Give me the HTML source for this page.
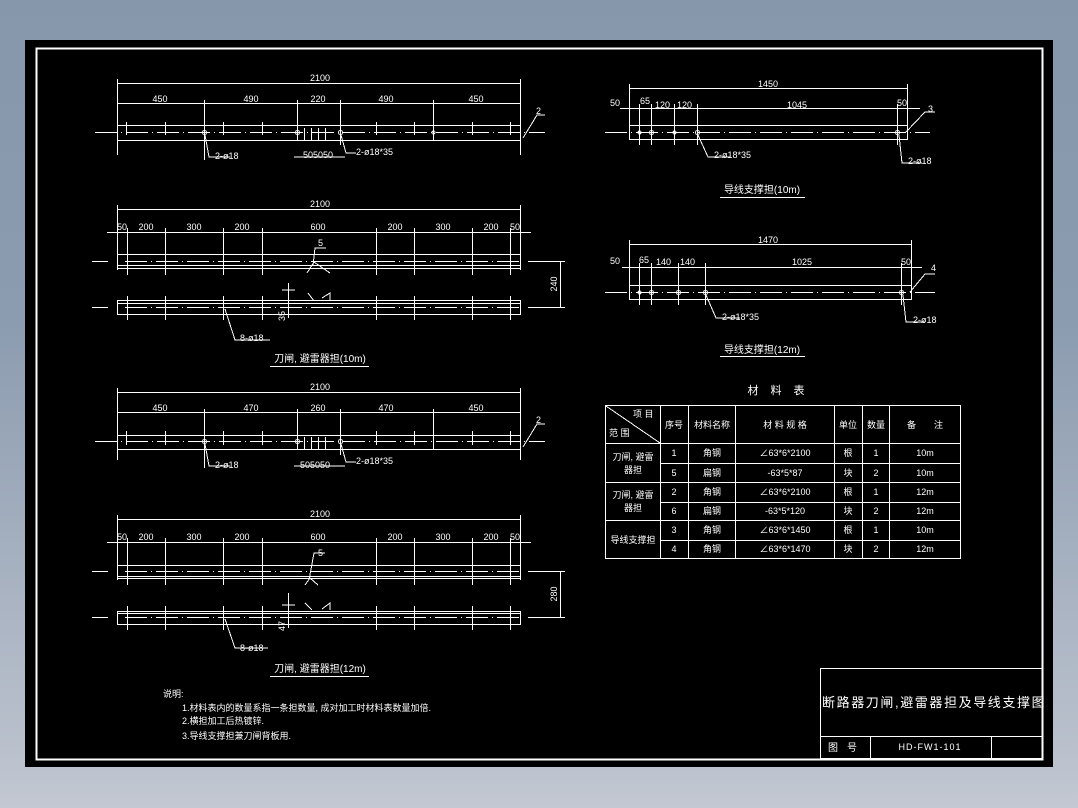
<!DOCTYPE html>
<html><head><meta charset="utf-8"><style>
html,body{margin:0;padding:0;width:1078px;height:808px;overflow:hidden;background:linear-gradient(#8797ab,#8c9cb0 40%,#b9c0cc 92%,#c3c8d2);}
svg{position:absolute;left:0;top:0}
text{fill:#fff;font-family:"Liberation Sans","WenQuanYi Zen Hei","Noto Sans CJK SC",sans-serif;font-size:9px}
.c{text-anchor:middle}
.z{font-size:10px}
</style></head><body>
<svg width="1078" height="808" viewBox="0 0 1078 808">
<rect x="25" y="40" width="1028" height="727" fill="#000"/>
<g fill="none" stroke="#fff" stroke-width="1" shape-rendering="crispEdges">
<rect x="36.5" y="48.5" width="1006" height="711" stroke-width="2"/>
<rect x="820.5" y="668.5" width="222" height="90"/>
<line x1="820" y1="736.5" x2="1042" y2="736.5"/>
<line x1="870.5" y1="736" x2="870.5" y2="759"/>
<line x1="991.5" y1="736" x2="991.5" y2="759"/>

<line x1="117" y1="83.5" x2="520" y2="83.5"/>
<line x1="117" y1="103.5" x2="520" y2="103.5"/>
<path d="M117.5 79V155M520.5 79V155M204.5 100V160M297.5 100V140M340.5 100V145M433.5 100V140"/>
<rect x="117.5" y="125.5" width="403" height="15"/>
<path d="M95 132.5H545" stroke-dasharray="22 4 1 4"/>
<path d="M126.5 122V135M165.5 122V135M223.5 122V135M262.5 122V135M376.5 122V135M414.5 122V135M472.5 122V135M510.5 122V135M304.5 128V140M311.5 128V140M318.5 128V140M325.5 128V140"/>
<path d="M205 135L209 157H230M341 135L346 153H356M523 138L537 115H545M294 157H345"/>
<circle cx="204.5" cy="132.5" r="2"/><circle cx="297.5" cy="132.5" r="2"/><circle cx="340.5" cy="132.5" r="2"/><circle cx="433.5" cy="132.5" r="1.5"/>

<line x1="117" y1="209.5" x2="520" y2="209.5"/>
<line x1="107" y1="232.5" x2="531" y2="232.5"/>
<path d="M117.5 205V270M520.5 205V270M127.5 228V275M165.5 228V275M223.5 228V275M262.5 228V275M376.5 228V275M414.5 228V275M472.5 228V275M510.5 228V275"/>
<rect x="117.5" y="254.5" width="403" height="14"/>
<line x1="117" y1="265.5" x2="520" y2="265.5"/>
<path d="M92 261.5H108M125 261.5H520M528 261.5H545" stroke-dasharray="22 4 1 4"/>
<rect x="117.5" y="300.5" width="403" height="14"/>
<line x1="117" y1="303.5" x2="520" y2="303.5"/>
<path d="M92 307.5H108M125 307.5H520M528 307.5H545" stroke-dasharray="22 4 1 4"/>
<path d="M127.5 296V320M165.5 296V320M223.5 296V320M262.5 296V320M376.5 296V320M414.5 296V320M472.5 296V320M510.5 296V320M288.5 283V318M282 290H295"/>
<path d="M307 273L314 262L330 273M322 298L330 293V301M308 293L314 301"/>
<path d="M313 266L315 248H326M225 309L235 340H270"/>
<path d="M528 261.5H565M528 307.5H565M560.5 261V308"/>
<path d="M270 366.5H369"/>

<line x1="117" y1="392.5" x2="520" y2="392.5"/>
<line x1="117" y1="412.5" x2="520" y2="412.5"/>
<path d="M117.5 388V460M520.5 388V460M204.5 409V468M297.5 409V450M340.5 409V455M433.5 409V450"/>
<rect x="117.5" y="435.5" width="403" height="14"/>
<path d="M95 441.5H545" stroke-dasharray="22 4 1 4"/>
<path d="M126.5 431V445M165.5 431V445M223.5 431V445M262.5 431V445M376.5 431V445M414.5 431V445M472.5 431V445M510.5 431V445M304.5 437V450M311.5 437V450M318.5 437V450M325.5 437V450"/>
<path d="M205 444L209 466H230M341 444L346 462H356M523 447L537 424H545M294 466H345"/>
<circle cx="204.5" cy="441.5" r="2"/><circle cx="297.5" cy="441.5" r="2"/><circle cx="340.5" cy="441.5" r="2"/>

<line x1="117" y1="519.5" x2="520" y2="519.5"/>
<line x1="107" y1="542.5" x2="531" y2="542.5"/>
<path d="M117.5 515V580M520.5 515V580M127.5 538V585M165.5 538V585M223.5 538V585M262.5 538V585M376.5 538V585M414.5 538V585M472.5 538V585M510.5 538V585"/>
<rect x="117.5" y="565.5" width="403" height="13"/>
<line x1="117" y1="576.5" x2="520" y2="576.5"/>
<path d="M92 571.5H108M125 571.5H520M528 571.5H545" stroke-dasharray="22 4 1 4"/>
<rect x="117.5" y="611.5" width="403" height="13"/>
<line x1="117" y1="613.5" x2="520" y2="613.5"/>
<path d="M92 617.5H108M125 617.5H520M528 617.5H545" stroke-dasharray="22 4 1 4"/>
<path d="M127.5 606V630M165.5 606V630M223.5 606V630M262.5 606V630M376.5 606V630M414.5 606V630M472.5 606V630M510.5 606V630M288.5 593V628M282 605H295"/>
<path d="M305 585L310 578L318 585M322 609L330 603V610M305 603L312 610"/>
<path d="M309 580L314 553H325M225 619L235 648H268"/>
<path d="M528 571.5H565M528 617.5H565M560.5 571V618"/>
<path d="M270 676.5H369"/>

<line x1="629" y1="88.5" x2="907" y2="88.5"/>
<line x1="620" y1="108.5" x2="920" y2="108.5"/>
<path d="M629.5 84V128M907.5 84V128M639.5 104V145M651.5 104V145M674.5 104V145M697.5 104V145M897.5 104V145"/>
<rect x="629.5" y="125.5" width="278" height="14"/>
<path d="M605 132.5H930" stroke-dasharray="22 4 1 4"/>
<circle cx="639.5" cy="132.5" r="1.5"/><circle cx="651.5" cy="132.5" r="2"/><circle cx="674.5" cy="132.5" r="1.5"/><circle cx="697.5" cy="132.5" r="2"/><circle cx="897.5" cy="132.5" r="2"/>
<path d="M698 135L708 157H730M899 135L902 163H922M906 132L925 112H935"/>
<path d="M720 197.5H805"/>

<line x1="629" y1="244.5" x2="911" y2="244.5"/>
<line x1="622" y1="267.5" x2="922" y2="267.5"/>
<path d="M629.5 240V288M911.5 240V288M639.5 263V305M651.5 263V305M678.5 263V305M705.5 263V305M901.5 263V305"/>
<rect x="629.5" y="285.5" width="282" height="14"/>
<path d="M605 292.5H935" stroke-dasharray="22 4 1 4"/>
<circle cx="639.5" cy="292.5" r="1.5"/><circle cx="651.5" cy="292.5" r="2"/><circle cx="678.5" cy="292.5" r="2"/><circle cx="705.5" cy="292.5" r="2"/><circle cx="901.5" cy="292.5" r="2"/>
<path d="M706 295L716 318H740M903 295L906 322H925M910 292L925 274H935"/>
<path d="M720 356.5H805"/>

<rect x="605.5" y="405.5" width="355" height="153"/>
<path d="M605 443.5H960M660 463.5H960M605 482.5H960M660 502.5H960M605 520.5H960M660 540.5H960"/>
<path d="M660.5 405V558M688.5 405V558M735.5 405V558M834.5 405V558M862.5 405V558M889.5 405V558"/>
<path d="M606 406L660 443"/>
</g>

<text class="c" x="320" y="81">2100</text>
<text class="c" x="160" y="102">450</text><text class="c" x="251" y="102">490</text><text class="c" x="318" y="102">220</text><text class="c" x="386" y="102">490</text><text class="c" x="476" y="102">450</text>
<text x="536" y="114">2</text>
<text x="215" y="159">2-ø18</text><text x="356" y="155">2-ø18*35</text><text x="303" y="158">505050</text>
<text class="c" x="320" y="207">2100</text>
<text class="c" x="122" y="230">50</text><text class="c" x="146" y="230">200</text><text class="c" x="194" y="230">300</text><text class="c" x="242" y="230">200</text><text class="c" x="318" y="230">600</text><text class="c" x="395" y="230">200</text><text class="c" x="443" y="230">300</text><text class="c" x="491" y="230">200</text><text class="c" x="515" y="230">50</text>
<text x="318" y="246">5</text>
<text x="240" y="341">8-ø18</text>
<text transform="translate(557,284) rotate(-90)" class="c">240</text>
<text transform="translate(285,316) rotate(-90)" class="c">35</text>
<text class="c z" x="320" y="362">刀闸, 避雷器担(10m)</text>
<text class="c" x="320" y="390">2100</text>
<text class="c" x="160" y="411">450</text><text class="c" x="251" y="411">470</text><text class="c" x="318" y="411">260</text><text class="c" x="386" y="411">470</text><text class="c" x="476" y="411">450</text>
<text x="536" y="423">2</text>
<text x="215" y="468">2-ø18</text><text x="356" y="464">2-ø18*35</text><text x="300" y="468">505050</text>
<text class="c" x="320" y="517">2100</text>
<text class="c" x="122" y="540">50</text><text class="c" x="146" y="540">200</text><text class="c" x="194" y="540">300</text><text class="c" x="242" y="540">200</text><text class="c" x="318" y="540">600</text><text class="c" x="395" y="540">200</text><text class="c" x="443" y="540">300</text><text class="c" x="491" y="540">200</text><text class="c" x="515" y="540">50</text>
<text x="318" y="556">5</text>
<text x="240" y="651">8-ø18</text>
<text transform="translate(557,594) rotate(-90)" class="c">280</text>
<text transform="translate(285,626) rotate(-90)" class="c">47</text>
<text class="c z" x="320" y="672">刀闸, 避雷器担(12m)</text>
<text class="c" x="768" y="87">1450</text>
<text x="610" y="106">50</text><text x="640" y="104">65</text><text x="655" y="108">120</text><text x="677" y="108">120</text><text class="c" x="797" y="108">1045</text><text x="897" y="106">50</text>
<text x="928" y="112">3</text>
<text x="714" y="158">2-ø18*35</text><text x="908" y="164">2-ø18</text>
<text class="c z" x="762" y="193">导线支撑担(10m)</text>
<text class="c" x="768" y="243">1470</text>
<text x="610" y="264">50</text><text x="639" y="263">65</text><text x="656" y="265">140</text><text x="680" y="265">140</text><text class="c" x="802" y="265">1025</text><text x="901" y="265">50</text>
<text x="931" y="271">4</text>
<text x="722" y="320">2-ø18*35</text><text x="913" y="323">2-ø18</text>
<text class="c z" x="762" y="353">导线支撑担(12m)</text>
<text class="c" x="782" y="394" style="font-size:11px;letter-spacing:12px">材料表</text>
<text x="633" y="417">项 目</text><text x="609" y="436">范 围</text>
<text class="c" x="674" y="428">序号</text><text class="c" x="712" y="428">材料名称</text><text class="c" x="785" y="428">材 料 规 格</text><text class="c" x="848" y="428">单位</text><text class="c" x="876" y="428">数量</text><text class="c" x="925" y="428">备　　注</text>
<text class="c" x="633" y="460">刀闸, 避雷</text><text class="c" x="633" y="473">器担</text>
<text class="c" x="633" y="498">刀闸, 避雷</text><text class="c" x="633" y="511">器担</text>
<text class="c" x="633" y="543">导线支撑担</text>
<text class="c" x="674" y="456">1</text><text class="c" x="712" y="456">角钢</text><text class="c" x="785" y="456">∠63*6*2100</text><text class="c" x="848" y="456">根</text><text class="c" x="876" y="456">1</text><text class="c" x="925" y="456">10m</text>
<text class="c" x="674" y="476">5</text><text class="c" x="712" y="476">扁钢</text><text class="c" x="785" y="476">-63*5*87</text><text class="c" x="848" y="476">块</text><text class="c" x="876" y="476">2</text><text class="c" x="925" y="476">10m</text>
<text class="c" x="674" y="495">2</text><text class="c" x="712" y="495">角钢</text><text class="c" x="785" y="495">∠63*6*2100</text><text class="c" x="848" y="495">根</text><text class="c" x="876" y="495">1</text><text class="c" x="925" y="495">12m</text>
<text class="c" x="674" y="514">6</text><text class="c" x="712" y="514">扁钢</text><text class="c" x="785" y="514">-63*5*120</text><text class="c" x="848" y="514">块</text><text class="c" x="876" y="514">2</text><text class="c" x="925" y="514">12m</text>
<text class="c" x="674" y="533">3</text><text class="c" x="712" y="533">角钢</text><text class="c" x="785" y="533">∠63*6*1450</text><text class="c" x="848" y="533">根</text><text class="c" x="876" y="533">1</text><text class="c" x="925" y="533">10m</text>
<text class="c" x="674" y="552">4</text><text class="c" x="712" y="552">角钢</text><text class="c" x="785" y="552">∠63*6*1470</text><text class="c" x="848" y="552">块</text><text class="c" x="876" y="552">2</text><text class="c" x="925" y="552">12m</text>
<text x="163" y="697">说明:</text>
<text x="182" y="711">1.材料表内的数量系指一条担数量, 成对加工时材料表数量加倍.</text>
<text x="182" y="724">2.横担加工后热镀锌.</text>
<text x="182" y="739">3.导线支撑担兼刀闸背板用.</text>
<text x="822" y="707" style="font-size:13px;letter-spacing:1.6px">断路器刀闸,避雷器担及导线支撑图</text>
<text x="828" y="751" style="font-size:10px;letter-spacing:9px">图号</text>
<text class="c" x="930" y="750" style="letter-spacing:1px">HD-FW1-101</text>
</svg>
</body></html>
